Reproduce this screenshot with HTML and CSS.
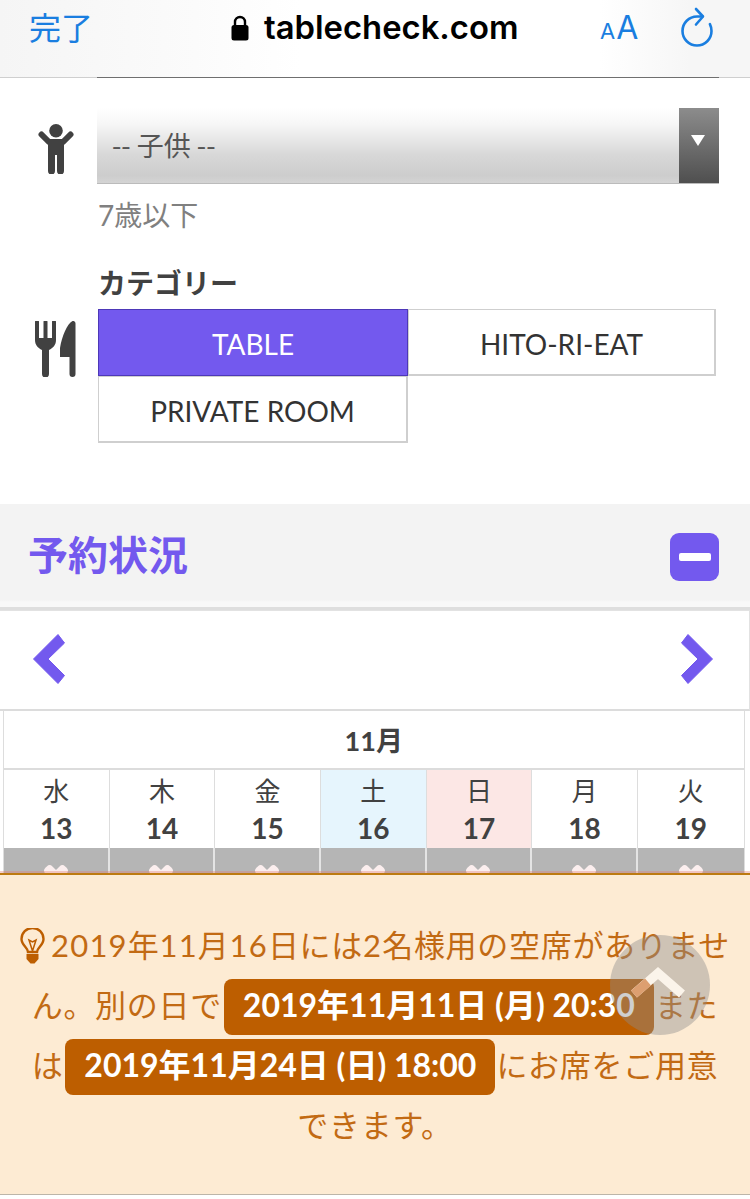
FILE: index.html
```html
<!DOCTYPE html>
<html lang="ja">
<head>
<meta charset="utf-8">
<title>tablecheck.com</title>
<link rel="stylesheet" href="styles.css">
</head>
<body>
<div class="page">
  <header class="bar">
    <span class="done">完了</span>
    <div class="addr">
      <svg class="lock" viewBox="0 0 18 26"><path d="M4 11V7a5 5 0 0 1 10 0v4" fill="none" stroke="#000" stroke-width="2.4"/><rect x="0.5" y="10" width="17" height="15.5" rx="2.5" fill="#000"/></svg>
      <span class="host">tablecheck.com</span>
    </div>
    <div class="aa"><span class="a-small">A</span><span class="a-big">A</span></div>
    <svg class="reload" viewBox="0 0 34 42"><path d="M22.500 10.500H17A14.500 14.500 0 1 0 31.500 25c0-2.500-.6-4.800-1.600-6.800" fill="none" stroke="#1a7ee0" stroke-width="2.600" stroke-linecap="round"/><path d="M16 3l7 7.500-7 8" fill="none" stroke="#1a7ee0" stroke-width="2.600" stroke-linecap="round" stroke-linejoin="round"/></svg>
  </header>
  <div class="edge"><div class="edge-dark"></div></div>

  <main class="form">
    <div class="row row-child">
      <svg class="ico-person" viewBox="0 0 36 50"><circle cx="18" cy="6.800" r="6.800" fill="#414141"/><path d="M3.500 10.500L11 18h14l7.500-7.500" fill="none" stroke="#414141" stroke-width="6" stroke-linecap="round" stroke-linejoin="round"/><path d="M10 15h16v32a3.300 3.300 0 0 1-7 0V31h-2v16a3.300 3.300 0 0 1-7 0z" fill="#414141"/></svg>
      <div class="col">
        <div class="select"><span class="select-label">-- 子供 --</span><span class="select-arrow"></span></div>
        <p class="hint">7歳以下</p>
      </div>
    </div>
    <div class="row row-cat">
      <svg class="ico-food" viewBox="0 0 42 56"><path d="M0 1a2 2 0 0 1 4 0v16h4.500V1a2 2 0 0 1 4 0v16H17V1a2 2 0 0 1 4 0v18c0 5-3 8-7 10v24a3.500 3.500 0 0 1-7 0V29c-4-2-7-5-7-10z" fill="#414141"/><path d="M37.500 0c1.500 0 3 .6 3 2.500V53a3 3 0 0 1-6 0V36H25v-9C27 15 32 3 37.500 0z" fill="#414141"/></svg>
      <div class="col">
        <h3 class="cat-title">カテゴリー</h3>
        <div class="cats">
          <div class="cat cat-active">TABLE</div>
          <div class="cat">HITO-RI-EAT</div>
          <div class="cat">PRIVATE ROOM</div>
        </div>
      </div>
    </div>
  </main>

  <section class="status">
    <h2 class="status-title">予約状況</h2>
    <span class="minus"><span class="minus-bar"></span></span>
  </section>

  <nav class="pager">
    <svg class="chev" viewBox="0 0 32 50"><path d="M.5 25L25 .5 31.500 9 15 25l16.500 16.500L25 49.500z" fill="#7359ee" stroke="#7359ee" stroke-linejoin="round"/></svg>
    <svg class="chev" viewBox="0 0 32 50"><path d="M31.500 25L7 .5.5 9 17 25 .5 41.500 7 49.500z" fill="#7359ee" stroke="#7359ee" stroke-linejoin="round"/></svg>
  </nav>

  <div class="cal">
    <div class="month">11月</div>
    <div class="days">
      <div class="day"><span class="dow">水</span><b class="num">13</b></div>
      <div class="day"><span class="dow">木</span><b class="num">14</b></div>
      <div class="day"><span class="dow">金</span><b class="num">15</b></div>
      <div class="day day-sat"><span class="dow">土</span><b class="num">16</b></div>
      <div class="day day-sun"><span class="dow">日</span><b class="num">17</b></div>
      <div class="day"><span class="dow">月</span><b class="num">18</b></div>
      <div class="day"><span class="dow">火</span><b class="num">19</b></div>
    </div>
    <div class="slots">
      <div class="slot"></div><div class="slot"></div><div class="slot"></div><div class="slot"></div><div class="slot"></div><div class="slot"></div><div class="slot"></div>
    </div>
  </div>

  <aside class="notice">
    <p class="notice-text"><svg class="bulb" viewBox="0 0 25 36"><path d="M8 24c0-4.500-6.500-6.500-6.500-13a11 11 0 0 1 22 0c0 6.500-6.500 8.500-6.500 13z" fill="none" stroke="#bd5e00" stroke-width="2.400"/><path d="M12.500 23L9 12l3.500 2 3.500-2z" fill="none" stroke="#bd5e00" stroke-width="1.500"/><path d="M6.500 26h12v5l-4 4.500h-4l-4-4.500z" fill="#bd5e00"/></svg><span class="digits">2019</span>年<span class="digits">11</span>月<span class="digits">16</span>日には<span class="digits">2</span>名様用の空席がありませ<br>ん。別の日で<a class="pill">2019年11月11日 (月) 20:30</a>また<br>は<a class="pill">2019年11月24日 (日) 18:00</a>にお席をご用意<br>できます。</p>
  </aside>
  <div class="to-top"><svg class="to-top-ico" viewBox="0 0 60 36"><path d="M4 31L28 10l24 21" fill="none" stroke="#fbf4ea" stroke-width="9"/><path d="M4 31L18 19" fill="none" stroke="#dd9f70" stroke-width="9"/></svg></div>
</div>
</body>
</html>
```
FILE: styles.css
```css
* { box-sizing: border-box; }
html, body { margin: 0; padding: 0; }
body {
  width: 750px;
  height: 1199px;
  overflow: hidden;
  background: #fff;
  color: #414141;
  font-family: Lato, "Noto Sans CJK JP", sans-serif;
}
.page { position: relative; width: 750px; height: 1199px; overflow: hidden; }

.bar {
  height: 77px;
  display: flex;
  align-items: flex-start;
  padding: 10px 0 0 29px;
  background: linear-gradient(90deg, #f5f5f5 0, #fbfbfb 26%, #fff 40%, #fff 80%, #f6f6f6 92%);
}
.done { font: 32px/36px "Noto Sans CJK JP", sans-serif; color: #1a7ee0; width: 202px; margin-top: -2px; }
.addr { display: flex; align-items: center; gap: 15px; width: 370px; height: 36px; }
.lock { width: 18px; height: 26px; }
.host { font: 600 32.800px/36px Inter, sans-serif; color: #000; margin-top: -2px; }
.aa { width: 66px; color: #1a7ee0; font-family: Inter, sans-serif; line-height: 36px; height: 36px; display: flex; align-items: baseline; gap: 1px; }
.a-small { font-size: 22px; margin-left: -1px; }
.a-big { font-size: 32px; }
.reload { width: 34px; height: 42px; margin-left: 13px; margin-top: -4px; }

.edge { height: 1px; background: #cfcfcf; padding-left: 97px; }
.edge-dark { width: 622px; height: 1px; background: #6f6f6f; }

.form { height: 426px; padding-top: 30px; }
.row { display: flex; }
.col { display: flex; flex-direction: column; }
.row-child { height: 155px; }
.ico-person { width: 36px; height: 50px; margin: 16px 0 0 38px; flex: none; }
.row-child .col { margin-left: 23px; }
.select {
  width: 622px;
  height: 76px;
  display: flex;
  justify-content: space-between;
  background: linear-gradient(#fff 0, #f6f6f6 22%, #d8d8d8 62%, #cdcdcd 90%, #d4d4d4 100%);
  border-bottom: 1px solid #bbb;
}
.select-label { font: 27px/73px "Noto Sans CJK JP", sans-serif; color: #555; padding-left: 15px; }
.select-arrow {
  width: 40px;
  height: 75px;
  position: relative;
  background: linear-gradient(#8c8c8c, #4f4f4f);
}
.select-arrow::after {
  content: "";
  position: absolute;
  left: 12px;
  top: 27px;
  border-left: 7.500px solid transparent;
  border-right: 7.500px solid transparent;
  border-top: 11px solid #fff;
}
.hint { margin: 13px 0 0 1px; font: 28px/36px Lato, "Noto Sans CJK JP", sans-serif; color: #808080; }

.row-cat { align-items: flex-start; }
.ico-food { width: 42px; height: 56px; margin: 58px 0 0 35px; flex: none; }
.row-cat .col { margin-left: 21px; }
.cat-title { margin: 0; font: 700 28px/36px "Noto Sans CJK JP", sans-serif; color: #414141; height: 46px; padding-top: 1px; }
.cats { display: grid; grid-template-columns: 310px 308px; width: 618px; }
.cat {
  height: 67px;
  padding-top: 3px;
  display: flex;
  align-items: center;
  justify-content: center;
  font: 28px/1 Lato, sans-serif;
  color: #333;
  border: 2px solid #cfcfcf;
  border-top-width: 1px;
  border-left-width: 1px;
}
.cat-active { background: #7359ee; border: 1px solid #4d38b8; color: #fff; padding-top: 2px; }

.status {
  height: 106px;
  background: linear-gradient(#f3f3f3 0, #f3f3f3 96px, #f8f8f8 98px);
  display: flex;
  justify-content: space-between;
  align-items: center;
  padding: 3px 31px 0 28px;
  border-bottom: 3px solid #dedede;
}
.status-title { margin: 0 0 9px; font: 700 40px/1 "Noto Sans CJK JP", sans-serif; color: #7359ee; }
.minus { width: 49px; height: 48px; background: #7359ee; border-radius: 9px; display: flex; align-items: center; justify-content: center; }
.minus-bar { width: 32px; height: 8px; background: #fff; border-radius: 2px; }

.pager {
  height: 101px;
  display: flex;
  justify-content: space-between;
  padding: 23px 36px 0 33px;
  border: 1px solid #e2e2e2;
  border-left: 0;
  border-bottom: 2px solid #dcdcdc;
}
.chev { width: 32px; height: 50px; }

.cal { margin: 0 5.500px 0 3px; border-left: 1px solid #ddd; border-right: 1px solid #ddd; }
.month { height: 59px; text-align: center; font: 700 27px/59px Lato, "Noto Sans CJK JP", sans-serif; color: #414141; border-bottom: 2px solid #dcdcdc; }
.days, .slots { display: grid; grid-template-columns: repeat(7, 1fr); }
.day { height: 78px; display: flex; flex-direction: column; align-items: center; border-right: 1px solid #ddd; }
.day:last-child, .slot:last-child { border-right: 0; }
.day-sat { background: #e6f5fd; }
.day-sun { background: #fce7e5; }
.dow { font: 26px/40px "Noto Sans CJK JP", sans-serif; color: #414141; height: 40px; }
.num { font: 700 28px/36px Lato, sans-serif; color: #414141; }
.slots { height: 30px; }
.slot { position: relative; overflow: hidden; background: #b5b5b5; border-right: 2px solid #e4e4e4; }
.slot::before, .slot::after {
  content: "";
  position: absolute;
  left: 50%;
  top: 23.500px;
  width: 28px;
  height: 10px;
  margin-left: -14px;
  border-radius: 4px;
  background: #fbeeee;
  transform: rotate(45deg);
}
.slot::after { transform: rotate(-45deg); }

.notice {
  position: absolute;
  left: 0;
  right: 0;
  top: 873px;
  height: 322px;
  background: #fdebd3;
  border-top: 2px solid #bd7a10;
  border-bottom: 1px solid #bdb5a8;
  box-shadow: 0 -2px 0 rgba(225, 120, 110, 0.35);
  padding: 40px 0 0;
}
.notice-text { margin: 0; text-align: center; font: 31px/60px Lato, "Noto Sans CJK JP", sans-serif; color: #c26a13; letter-spacing: 0.7px; }
.digits { letter-spacing: 1.200px; }
.bulb { width: 25px; height: 36px; vertical-align: -7px; margin-right: 6px; }
.pill {
  display: inline-block;
  height: 56px;
  width: 430px;
  border-radius: 8px;
  background: #bd5e00;
  color: #fff;
  font-weight: 700;
  font-size: 32px;
  line-height: 52px;
  letter-spacing: 0;
  margin: 4px 1px 0 2px;
  vertical-align: top;
}
.to-top {
  position: absolute;
  left: 610px;
  top: 935px;
  width: 100px;
  height: 100px;
  border-radius: 50%;
  background: rgba(140, 140, 140, 0.42);
  display: flex;
  justify-content: center;
  padding-top: 28px;
}
.to-top-ico { width: 60px; height: 36px; }
```
